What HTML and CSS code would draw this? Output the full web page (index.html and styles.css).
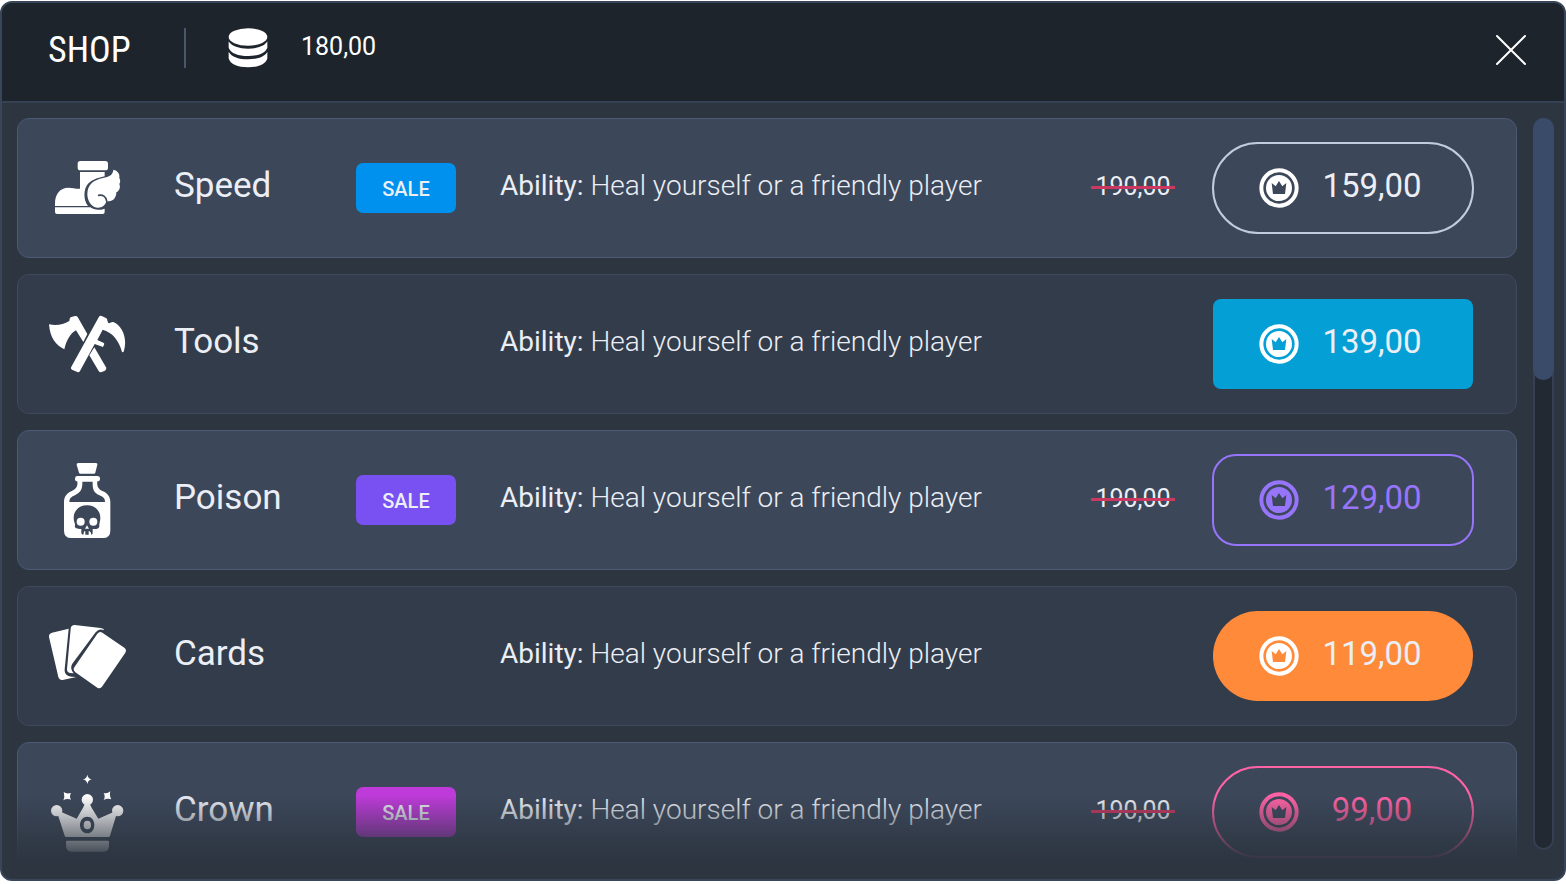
FILE: index.html
```html
<!DOCTYPE html>
<html lang="en">
<head>
<meta charset="utf-8">
<title>Shop</title>
<meta name="viewport" content="width=device-width, initial-scale=1">
<link rel="stylesheet" href="styles.css">
</head>
<body>
<svg class="sprite" aria-hidden="true">
  <symbol id="coin" viewBox="0 0 120 120">
    <circle cx="60" cy="60" r="53" fill="none" stroke="currentColor" stroke-width="12"/>
    <path fill="currentColor" fill-rule="evenodd" d="M60 21a39 39 0 1 0 0 78a39 39 0 1 0 0-78zM38 45l12 10 10-16 10 16 12-10-4 33H42z"/>
  </symbol>
</svg>
<main class="shop">
  <header class="shop-header">
    <h1 class="title">SHOP</h1>
    <div class="balance">
      <svg class="coins" viewBox="0 0 120 120" aria-hidden="true">
        <ellipse cx="60" cy="27" rx="58" ry="26"/>
        <path d="M2 40c8 15 32 22 58 22s50-7 58-22v19c-6 17-30 25-58 25S8 76 2 59z"/>
        <path d="M2 71c8 16 32 23 58 23s50-7 58-23v20c-4 18-28 27-58 27S6 109 2 91z"/>
      </svg>
      <span class="amount">180,00</span>
    </div>
    <button class="close" type="button" aria-label="Close">
      <svg viewBox="0 0 32 32" aria-hidden="true"><path d="M2 2l28 28M30 2L2 30"/></svg>
    </button>
  </header>
  <div class="shop-body">
    <ul class="items">
      <li class="item featured">
        <svg class="item-icon" viewBox="54 24 234 240" aria-hidden="true">
          <rect x="143" y="63" width="91" height="28" rx="8"/>
          <path d="M150 96h74v13c-24 5-44 13-54 28-8 12-11 42 4 61H75v-8c0-27 15-47 40-47 12 0 24 4 35 3z"/>
          <path d="M75 202h106c10 8 26 10 43 4v10q0 6-6 6H81q-6 0-6-6z"/>
          <path d="M250 89c13 3 20 12 18 25 4 7 3 13 0 18 4 10 1 20-9 25 0 16-9 26-23 27-3 0-5-1-7-1-3 14-14 21-27 20-19-1-30-22-30-41 0-28 20-43 47-48 18-4 30-9 31-25z"/>
          <path class="cut" d="M206 166c12-3 22 4 24 17"/>
        </svg>
        <h2 class="name">Speed</h2>
        <span class="badge blue">SALE</span>
        <p class="ability"><b>Ability:</b> Heal yourself or a friendly player</p>
        <del class="old-price">190,00</del>
        <button class="buy outline pill silver" type="button"><svg class="coin" aria-hidden="true"><use href="#coin"/></svg><span class="price">159,00</span></button>
      </li>
      <li class="item">
        <svg class="item-icon" viewBox="54 12 234 240" aria-hidden="true">
          <path d="M57 73c21 4 42 2 61-10l1-7q1-4 5-5l11-3q5-1 8 3l29 51-12 24-22-35c-16 9-28 28-35 57C77 135 60 113 57 73z"/>
          <path d="M193 142l35 60q3 6-3 10l-10 4q-6 2-9-3l-28-47z"/>
          <path d="M207 50q3-4 8-2l13 6q5 3 4 8l3 7c5 2 8-4 15-3 26 11 43 47 32 86q-2 6-6 4c-8-34-30-60-58-67l-16 31 18 8q4 2 2 6l-3 7-25-9-44 81q-3 5-8 3l-16-7q-5-3-2-9z"/>
        </svg>
        <h2 class="name">Tools</h2>
        <p class="ability"><b>Ability:</b> Heal yourself or a friendly player</p>
        <button class="buy square cyan" type="button"><svg class="coin" aria-hidden="true"><use href="#coin"/></svg><span class="price">139,00</span></button>
      </li>
      <li class="item featured">
        <svg class="item-icon" viewBox="24 30 234 240" aria-hidden="true">
          <path d="M115 39h53q5 0 4 5l-6 24q-1 3-4 3h-41q-3 0-4-3l-7-24q-1-5 5-5z"/>
          <path fill-rule="evenodd" d="M111 78h61q8 0 8 8t-8 8c-2 18 5 24 17 30 14 6 22 17 22 32v86q0 22-22 22H94q-22 0-22-22v-86c0-15 8-26 22-32 12-6 20-12 18-30q-7 0-7-8t6-8zM127 95c1 24-6 33-21 40-12 5-18 10-18 21h107c0-11-6-16-18-21-15-7-20-16-19-40z"/>
          <path class="hole" d="M141 166c25 0 40 17 40 37 0 12-4 18-3 24 1 7-5 10-17 10l-3 0v12q0 5-4 5l-2-8h-3v8h-14v-8h-3l-2 8q-6 0-6-5v-12c-15 0-21-3-19-11 1-6-4-11-4-23 0-20 15-37 40-37z"/>
          <circle cx="122" cy="215" r="12"/><circle cx="160" cy="215" r="12"/>
          <path d="M141 226l6 10h-12zM132 244h4v11h-4zM146 244h4v11h-4z"/>
        </svg>
        <h2 class="name">Poison</h2>
        <span class="badge violet">SALE</span>
        <p class="ability"><b>Ability:</b> Heal yourself or a friendly player</p>
        <del class="old-price">190,00</del>
        <button class="buy outline round lilac" type="button"><svg class="coin" aria-hidden="true"><use href="#coin"/></svg><span class="price">129,00</span></button>
      </li>
      <li class="item">
        <svg class="item-icon" viewBox="54 18 234 240" aria-hidden="true">
          <path d="M66 68l50-12-12 122c-1 13 7 21 20 22l15 1-41 9q-10 1-13-9L57 81q-1-10 9-13z"/>
          <path d="M134 45l78 9q9 1 11 7c-10-5-19-3-26 6l-69 93c-7 10-5 20 3 30l-11-1q-9-1-9-11l11-122q1-11 12-11z"/>
          <path d="M202 71q7-8 15-3l66 45q8 6 3 15l-69 101q-6 9-15 4l-66-46q-8-7-3-15z"/>
        </svg>
        <h2 class="name">Cards</h2>
        <p class="ability"><b>Ability:</b> Heal yourself or a friendly player</p>
        <button class="buy pill orange" type="button"><svg class="coin" aria-hidden="true"><use href="#coin"/></svg><span class="price">119,00</span></button>
      </li>
      <li class="item featured">
        <svg class="item-icon" viewBox="54 96 234 240" aria-hidden="true">
          <path d="M172 104q2 12 14 14-12 2-14 14-2-12-14-14 12-2 14-14zM101 156q8 7 22 3-6 10 0 20-12-5-23 2 5-10 1-25zM241 154q-4 13 3 24-11-5-23 2 6-11 0-21 11 3 20-5z"/>
          <circle cx="172" cy="179" r="17"/><circle cx="80" cy="212" r="17"/><circle cx="263" cy="212" r="17"/>
          <path fill-rule="evenodd" d="M164 192h16l4 10 21 34 46-20 7 12-18 59q-1 4-5 4H109q-4 0-5-4L85 229l7-14 48 21 20-34zM172 230c-12 0-22 10-22 25s10 25 22 25 21-10 21-25-9-25-21-25z"/>
          <ellipse cx="172" cy="255" rx="11" ry="13"/>
          <path d="M112 302h121q4 0 4 4v11q0 18-18 18h-93q-18 0-18-18v-11q0-4 4-4z"/>
        </svg>
        <h2 class="name">Crown</h2>
        <span class="badge magenta">SALE</span>
        <p class="ability"><b>Ability:</b> Heal yourself or a friendly player</p>
        <del class="old-price">190,00</del>
        <button class="buy outline pill pink" type="button"><svg class="coin" aria-hidden="true"><use href="#coin"/></svg><span class="price">99,00</span></button>
      </li>
    </ul>
    <div class="scrollbar"><div class="thumb"></div></div>
  </div>
</main>
</body>
</html>
```
FILE: styles.css
```css
* { box-sizing: border-box; }
body {
  margin: 0;
  padding: 1px 0 3px;
  background: #fff;
  color: #ebeef4;
  font-family: Roboto, "Liberation Sans", sans-serif;
}
h1, h2, p, ul { margin: 0; padding: 0; }
button { font: inherit; cursor: pointer; }
.sprite { display: none; }

.shop {
  display: flex;
  flex-direction: column;
  height: calc(100vh - 4px);
  border: 2px solid #394558;
  border-radius: 12px;
  background: #2c3540;
  overflow: hidden;
}
.shop-header {
  display: flex;
  flex: none;
  align-items: center;
  height: 100px;
  padding: 0 36px 4px 46px;
  border-bottom: 2px solid #354154;
  background: #1d242b;
  color: #fff;
}
.title {
  width: 136px;
  font: 400 36px/48px "Roboto Condensed", Roboto, sans-serif;
}
.balance {
  display: flex;
  align-items: center;
  height: 40px;
  padding-left: 42px;
  border-left: 2px solid #4a5669;
  margin-bottom: 4px;
}
.coins { width: 40px; height: 40px; fill: #fff; }
.amount {
  padding: 0 0 2px 33px;
  font-size: 25px;
  line-height: 30px;
}
.close {
  width: 34px;
  height: 34px;
  margin-left: auto;
  padding: 1px;
  border: 0;
  background: none;
}
.close svg {
  display: block;
  width: 32px;
  height: 32px;
  stroke: #fff;
  stroke-width: 2;
  stroke-linecap: round;
}

.shop-body {
  display: flex;
  flex: 1;
  gap: 16px;
  min-height: 0;
  padding: 15px 10px 0 15px;
}
.items {
  position: relative;
  display: flex;
  flex: 1;
  flex-direction: column;
  gap: 16px;
  min-width: 0;
  overflow: hidden;
  list-style: none;
}
.items::after {
  content: "";
  position: absolute;
  inset: auto 0 0;
  height: 84px;
  background: linear-gradient(#2c354000, #2c3540 66px);
  pointer-events: none;
}
.item {
  display: grid;
  grid-template-columns: 126px 182px 144px 1fr 84px 37px 262px;
  grid-template-areas: "icon name badge ability old . buy";
  flex: none;
  align-items: center;
  height: 140px;
  padding: 0 42px 0 30px;
  border: 1px solid #3f4b5c;
  border-radius: 12px;
  background: #323c4a;
}
.item.featured { background: #3c475a; border-color: #4a5a73; }
.item-icon { grid-area: icon; width: 78px; height: 80px; fill: #fff; }
.cut { fill: none; stroke: #3c475a; stroke-width: 5; stroke-linecap: round; }
.hole { fill: #3c475a; }
.name {
  grid-area: name;
  padding-bottom: 4px;
  font-size: 35px;
  font-weight: 400;
  line-height: 44px;
}
.badge {
  grid-area: badge;
  width: 100px;
  padding-top: 2px;
  border-radius: 7px;
  font-size: 20px;
  font-weight: 500;
  line-height: 48px;
  text-align: center;
}
.ability {
  grid-area: ability;
  padding-bottom: 4px;
  font-size: 28px;
  font-weight: 300;
  line-height: 36px;
  white-space: nowrap;
}
.ability b { font-weight: 400; }
.old-price {
  grid-area: old;
  position: relative;
  padding-bottom: 2px;
  font-size: 25px;
  font-weight: 400;
  line-height: 30px;
  text-align: center;
  text-decoration: none;
}
.old-price::after {
  content: "";
  position: absolute;
  inset: 14px 0 auto;
  height: 3px;
  background: #cc385f;
}
.buy {
  grid-area: buy;
  display: flex;
  align-items: center;
  justify-content: center;
  gap: 22px;
  height: 92px;
  padding: 0 4px 0 0;
  border: 1px solid transparent;
  background: none;
  background-clip: padding-box;
  color: #ebeef4;
}
.coin { width: 40px; height: 40px; color: #fff; }
.price {
  width: 102px;
  padding-bottom: 4px;
  font-size: 33px;
  line-height: 40px;
  text-align: center;
}

.pill { border-radius: 46px; }
.round { border-radius: 24px; }
.square { border-radius: 9px; }
.outline { border: 2px solid currentColor; }
.silver { border-color: #c1cddc; }
.lilac, .lilac .coin { color: #9775fa; }
.pink, .pink .coin { color: #ff62a5; }
.cyan { background-color: #039fd5; }
.orange { background-color: #ff8a3a; }
.blue { background: #0091ee; }
.violet { background: #7950f2; }
.magenta { background: #be3bd9; }

.scrollbar {
  flex: none;
  width: 21px;
  margin-bottom: 29px;
  border: 2px solid #354052;
  border-radius: 11px;
  background: #222932;
}
.thumb {
  height: 36%;
  margin: -2px;
  border-radius: 11px;
  background: #3a4b6a;
}
```
